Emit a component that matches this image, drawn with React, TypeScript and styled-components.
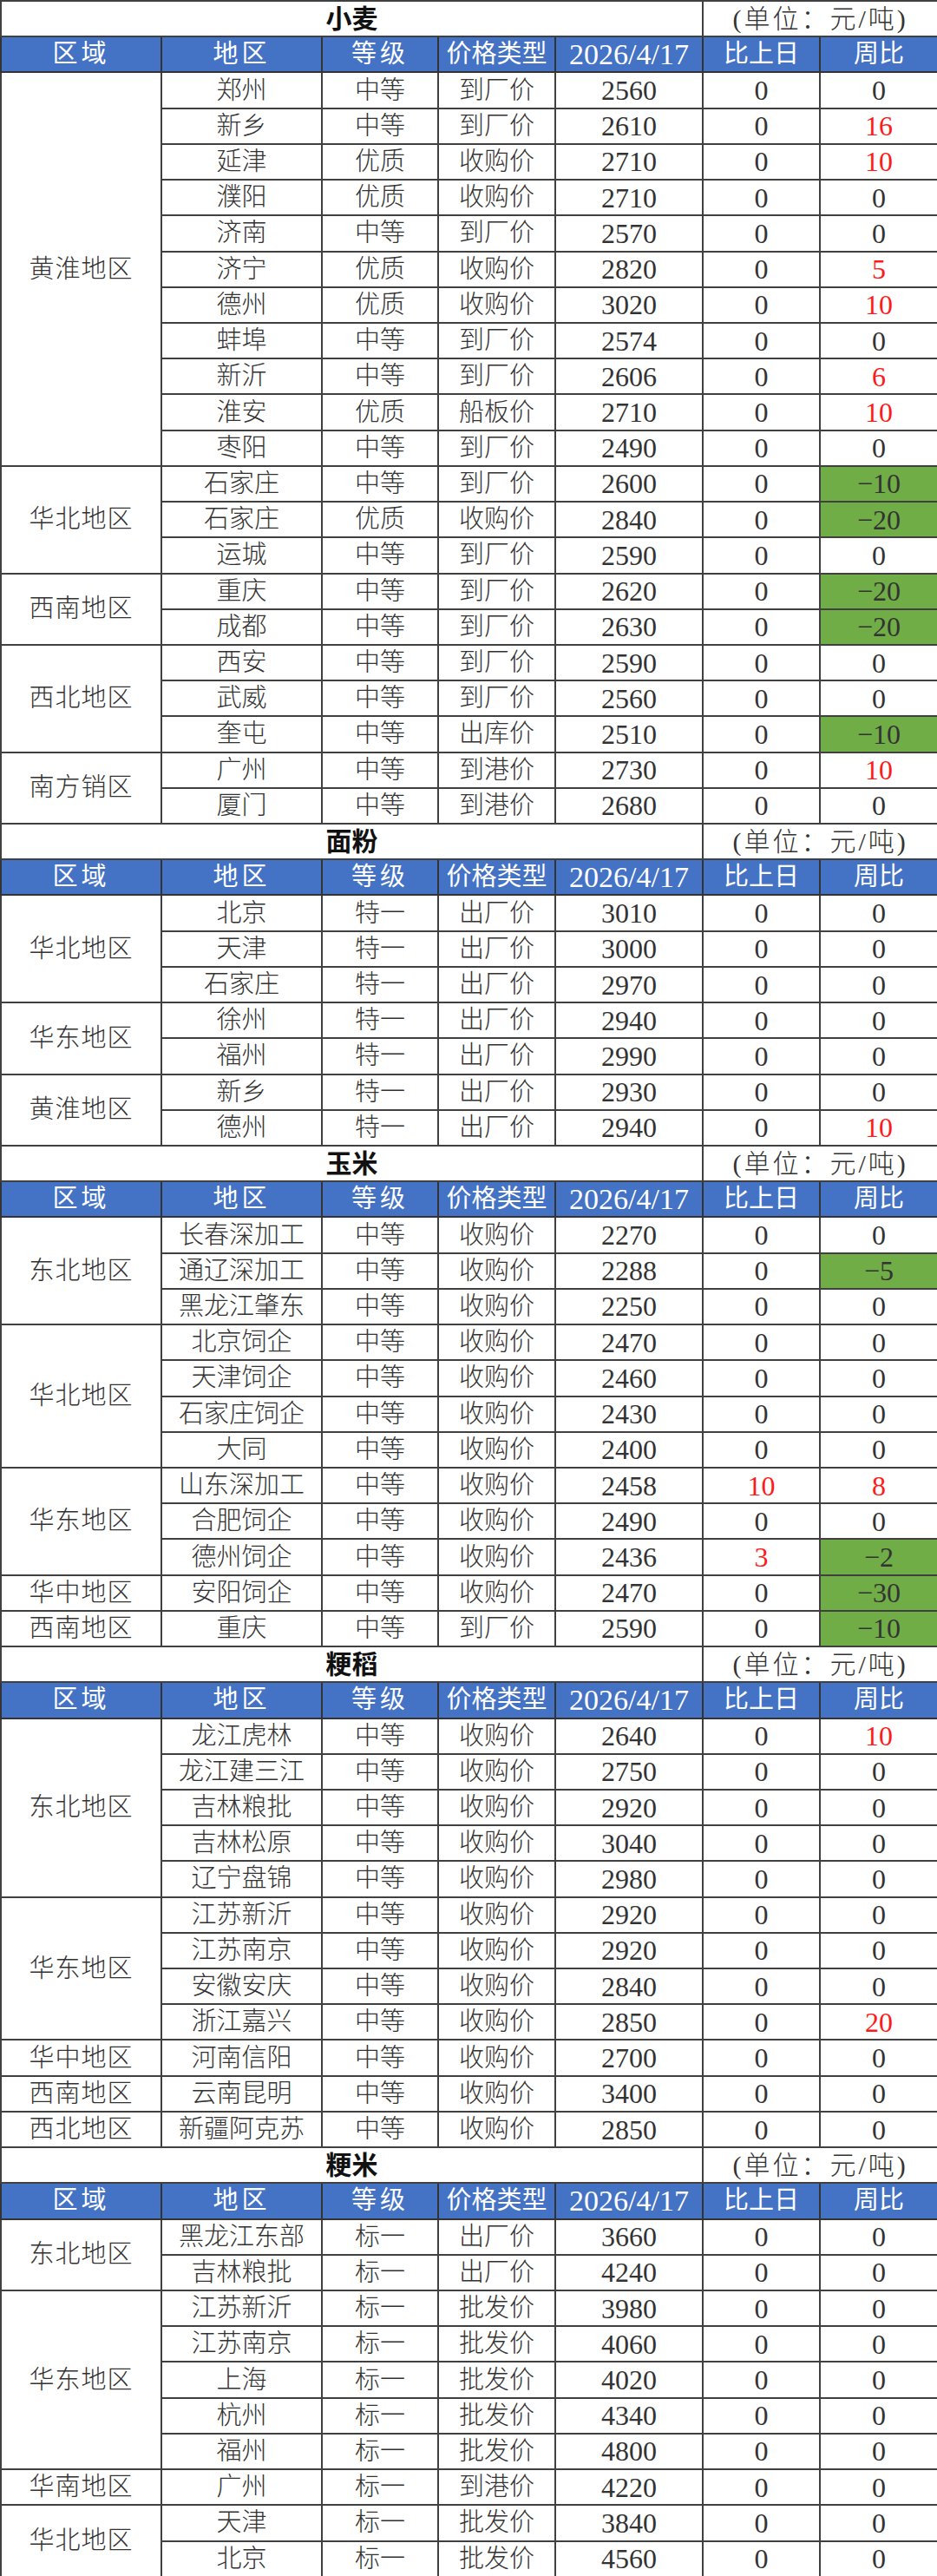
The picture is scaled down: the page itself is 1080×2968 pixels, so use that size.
import React from 'react';
import styled, { createGlobalStyle } from 'styled-components';

const GlobalStyle = createGlobalStyle`
  html, body {
    margin: 0;
    padding: 0;
    background: #ffffff;
  }
  body {
    font-family: "Liberation Serif", "Noto Sans CJK SC", serif;
    color: #262626;
  }
`;

const ROW_H = 2968 / 72;

const Sheet = styled.table`
  width: 1080px;
  border-collapse: collapse;
  table-layout: fixed;
  font-size: 29px;
  line-height: 1;

  td, th {
    line-height: 1;
    height: ${ROW_H - 2}px;
    box-sizing: border-box;
  }
`;

const TitleRow = styled.tr`
  height: ${ROW_H}px;
  background: #ffffff;
`;

const TitleCell = styled.td`
  border: 2px solid #404040;
  border-right: none;
  text-align: center;
  font-weight: 700;
  font-size: 30px;
  color: #111;
  padding: 0;
`;

const UnitCell = styled.td`
  border: 2px solid #404040;
  text-align: center;
  font-size: 30px;
  font-weight: 300;
  letter-spacing: 3px;
  color: #333;
  padding: 0;
  white-space: nowrap;
`;

const HeadRow = styled.tr`
  height: ${ROW_H}px;
  background: #4472c4;
`;

const HeadCell = styled.th<{ $wide?: boolean; $num?: boolean }>`
  border: 2px solid #333;
  color: #ffffff;
  font-weight: 400;
  font-size: ${(p) => (p.$num ? '34px' : '29px')};
  text-align: center;
  padding: 0;
  white-space: nowrap;
  letter-spacing: ${(p) => (p.$wide ? '4px' : '0')};
`;

const DataRow = styled.tr`
  height: ${ROW_H}px;
`;

type Tone = 'plain' | 'up' | 'down';

const Cell = styled.td<{ $tone?: Tone; $num?: boolean }>`
  border: 2px solid #404040;
  text-align: center;
  padding: 0;
  white-space: nowrap;
  font-weight: 300;
  font-size: ${(p) => (p.$num ? '32px' : '29px')};
  color: ${(p) => (p.$tone === 'up' ? '#ff1a1a' : '#333')};
  background: ${(p) => (p.$tone === 'down' ? '#70ad47' : 'transparent')};
`;

const RegionCell = styled(Cell)`
  vertical-align: middle;
  letter-spacing: 1px;
`;

type Row = [string, string, string, number, number, number];
interface Group {
  region: string;
  rows: Row[];
}
interface Section {
  title: string;
  groups: Group[];
}

const sections: Section[] = [
  {
    title: '小麦',
    groups: [
      {
        region: '黄淮地区',
        rows: [
          ['郑州', '中等', '到厂价', 2560, 0, 0],
          ['新乡', '中等', '到厂价', 2610, 0, 16],
          ['延津', '优质', '收购价', 2710, 0, 10],
          ['濮阳', '优质', '收购价', 2710, 0, 0],
          ['济南', '中等', '到厂价', 2570, 0, 0],
          ['济宁', '优质', '收购价', 2820, 0, 5],
          ['德州', '优质', '收购价', 3020, 0, 10],
          ['蚌埠', '中等', '到厂价', 2574, 0, 0],
          ['新沂', '中等', '到厂价', 2606, 0, 6],
          ['淮安', '优质', '船板价', 2710, 0, 10],
          ['枣阳', '中等', '到厂价', 2490, 0, 0],
        ],
      },
      {
        region: '华北地区',
        rows: [
          ['石家庄', '中等', '到厂价', 2600, 0, -10],
          ['石家庄', '优质', '收购价', 2840, 0, -20],
          ['运城', '中等', '到厂价', 2590, 0, 0],
        ],
      },
      {
        region: '西南地区',
        rows: [
          ['重庆', '中等', '到厂价', 2620, 0, -20],
          ['成都', '中等', '到厂价', 2630, 0, -20],
        ],
      },
      {
        region: '西北地区',
        rows: [
          ['西安', '中等', '到厂价', 2590, 0, 0],
          ['武威', '中等', '到厂价', 2560, 0, 0],
          ['奎屯', '中等', '出库价', 2510, 0, -10],
        ],
      },
      {
        region: '南方销区',
        rows: [
          ['广州', '中等', '到港价', 2730, 0, 10],
          ['厦门', '中等', '到港价', 2680, 0, 0],
        ],
      },
    ],
  },
  {
    title: '面粉',
    groups: [
      {
        region: '华北地区',
        rows: [
          ['北京', '特一', '出厂价', 3010, 0, 0],
          ['天津', '特一', '出厂价', 3000, 0, 0],
          ['石家庄', '特一', '出厂价', 2970, 0, 0],
        ],
      },
      {
        region: '华东地区',
        rows: [
          ['徐州', '特一', '出厂价', 2940, 0, 0],
          ['福州', '特一', '出厂价', 2990, 0, 0],
        ],
      },
      {
        region: '黄淮地区',
        rows: [
          ['新乡', '特一', '出厂价', 2930, 0, 0],
          ['德州', '特一', '出厂价', 2940, 0, 10],
        ],
      },
    ],
  },
  {
    title: '玉米',
    groups: [
      {
        region: '东北地区',
        rows: [
          ['长春深加工', '中等', '收购价', 2270, 0, 0],
          ['通辽深加工', '中等', '收购价', 2288, 0, -5],
          ['黑龙江肇东', '中等', '收购价', 2250, 0, 0],
        ],
      },
      {
        region: '华北地区',
        rows: [
          ['北京饲企', '中等', '收购价', 2470, 0, 0],
          ['天津饲企', '中等', '收购价', 2460, 0, 0],
          ['石家庄饲企', '中等', '收购价', 2430, 0, 0],
          ['大同', '中等', '收购价', 2400, 0, 0],
        ],
      },
      {
        region: '华东地区',
        rows: [
          ['山东深加工', '中等', '收购价', 2458, 10, 8],
          ['合肥饲企', '中等', '收购价', 2490, 0, 0],
          ['德州饲企', '中等', '收购价', 2436, 3, -2],
        ],
      },
      { region: '华中地区', rows: [['安阳饲企', '中等', '收购价', 2470, 0, -30]] },
      { region: '西南地区', rows: [['重庆', '中等', '到厂价', 2590, 0, -10]] },
    ],
  },
  {
    title: '粳稻',
    groups: [
      {
        region: '东北地区',
        rows: [
          ['龙江虎林', '中等', '收购价', 2640, 0, 10],
          ['龙江建三江', '中等', '收购价', 2750, 0, 0],
          ['吉林粮批', '中等', '收购价', 2920, 0, 0],
          ['吉林松原', '中等', '收购价', 3040, 0, 0],
          ['辽宁盘锦', '中等', '收购价', 2980, 0, 0],
        ],
      },
      {
        region: '华东地区',
        rows: [
          ['江苏新沂', '中等', '收购价', 2920, 0, 0],
          ['江苏南京', '中等', '收购价', 2920, 0, 0],
          ['安徽安庆', '中等', '收购价', 2840, 0, 0],
          ['浙江嘉兴', '中等', '收购价', 2850, 0, 20],
        ],
      },
      { region: '华中地区', rows: [['河南信阳', '中等', '收购价', 2700, 0, 0]] },
      { region: '西南地区', rows: [['云南昆明', '中等', '收购价', 3400, 0, 0]] },
      { region: '西北地区', rows: [['新疆阿克苏', '中等', '收购价', 2850, 0, 0]] },
    ],
  },
  {
    title: '粳米',
    groups: [
      {
        region: '东北地区',
        rows: [
          ['黑龙江东部', '标一', '出厂价', 3660, 0, 0],
          ['吉林粮批', '标一', '出厂价', 4240, 0, 0],
        ],
      },
      {
        region: '华东地区',
        rows: [
          ['江苏新沂', '标一', '批发价', 3980, 0, 0],
          ['江苏南京', '标一', '批发价', 4060, 0, 0],
          ['上海', '标一', '批发价', 4020, 0, 0],
          ['杭州', '标一', '批发价', 4340, 0, 0],
          ['福州', '标一', '批发价', 4800, 0, 0],
        ],
      },
      { region: '华南地区', rows: [['广州', '标一', '到港价', 4220, 0, 0]] },
      {
        region: '华北地区',
        rows: [
          ['天津', '标一', '批发价', 3840, 0, 0],
          ['北京', '标一', '批发价', 4560, 0, 0],
        ],
      },
    ],
  },
];

const colWidths = [185, 185, 134, 135, 170, 135, 136];
const heads = ['区域', '地区', '等级', '价格类型', '2026/4/17', '比上日', '周比'];

const toneOf = (n: number): Tone => (n > 0 ? 'up' : n < 0 ? 'down' : 'plain');
// spreadsheet shows a long minus for negatives
const fmt = (n: number) => (n < 0 ? '\u2212' + Math.abs(n) : String(n));

const SectionBlock = ({ section }: { section: Section }) => (
  <tbody>
    <TitleRow>
      <TitleCell colSpan={5}>{section.title}</TitleCell>
      <UnitCell colSpan={2}>(单位：元/吨)</UnitCell>
    </TitleRow>
    <HeadRow>
      {heads.map((h, i) => (
        <HeadCell key={h} $wide={i < 3} $num={i === 4}>
          {h}
        </HeadCell>
      ))}
    </HeadRow>
    {section.groups.map((g) =>
      g.rows.map((r, i) => (
        <DataRow key={g.region + i}>
          {i === 0 && <RegionCell rowSpan={g.rows.length}>{g.region}</RegionCell>}
          <Cell>{r[0]}</Cell>
          <Cell>{r[1]}</Cell>
          <Cell>{r[2]}</Cell>
          <Cell $num>{r[3]}</Cell>
          <Cell $num $tone={r[4] > 0 ? 'up' : 'plain'}>{fmt(r[4])}</Cell>
          <Cell $num $tone={toneOf(r[5])}>{fmt(r[5])}</Cell>
        </DataRow>
      ))
    )}
  </tbody>
);

export default function App() {
  return (
    <>
      <GlobalStyle />
      <Sheet>
        <colgroup>
          {colWidths.map((w, i) => (
            <col key={i} style={{ width: w }} />
          ))}
        </colgroup>
        {sections.map((s) => (
          <SectionBlock key={s.title} section={s} />
        ))}
      </Sheet>
    </>
  );
}
